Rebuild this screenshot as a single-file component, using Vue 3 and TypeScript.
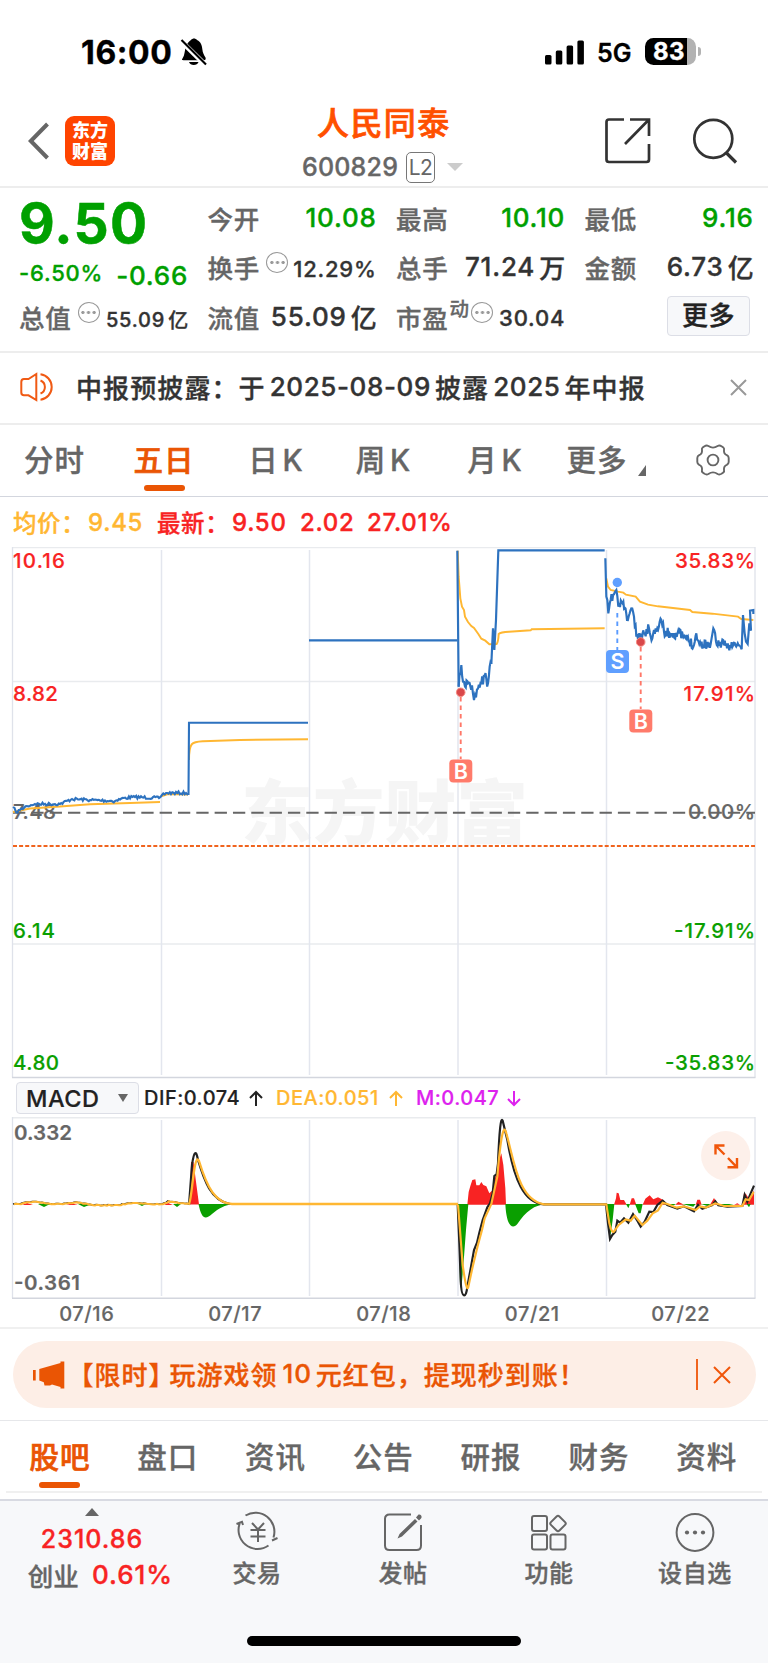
<script setup lang="ts">
type Pt = [number, number]

/** Deterministic intraday jitter laid over a coarse list of anchors. */
function wiggle(anchors: Pt[], step: number, amp: number, seed = 1): string {
  const out: string[] = []
  let s = seed
  const rnd = () => {
    s = (s * 16807) % 2147483647
    return s / 2147483647 - 0.5
  }
  anchors.forEach(([x, y], i) => {
    out.push(`${x.toFixed(1)},${y.toFixed(1)}`)
    const next = anchors[i + 1]
    if (!next) return
    const n = Math.floor((next[0] - x) / step)
    for (let k = 1; k < n; k++) {
      const t = k / n
      out.push(`${(x + (next[0] - x) * t).toFixed(1)},${(y + (next[1] - y) * t + rnd() * 2 * amp).toFixed(1)}`)
    }
  })
  return out.join(' ')
}

const day1 = wiggle([[13, 807], [16, 812], [20, 810], [27, 806], [35, 804], [60, 804], [72, 799], [90, 800], [115, 801], [124, 798], [135, 797], [159, 798], [162, 795], [166, 793], [186, 793], [188, 795]], 1.2, 1.5, 7)
const day4 = wiggle([[224, 800], [232, 735], [237, 785], [243, 800], [252, 790], [264, 796], [270, 840], [276, 832], [282, 806], [292, 790], [302, 768], [312, 790], [317, 740], [322, 732]], 2.2, 17, 5)
const day5 = wiggle([[664, 415], [667, 530], [673, 580], [680, 540], [697, 510], [703, 560], [718, 545], [729, 600], [742, 565], [750, 590], [757, 650], [768, 655], [780, 640], [795, 625], [805, 655], [815, 625], [832, 600], [840, 635], [862, 642], [885, 640], [905, 655], [930, 675], [937, 640], [946, 672], [980, 672], [988, 625], [996, 665], [1020, 676], [1068, 676]], 2.2, 15, 11)

const macdCalm = wiggle([[13, 1204], [20, 1204], [26, 1202], [38, 1202], [50, 1204], [62, 1204], [76, 1202], [92, 1205], [118, 1205], [128, 1203], [140, 1203], [150, 1204], [162, 1204], [168, 1201], [180, 1203], [189, 1204]], 2, 0.5, 3)

const tabs = ['分时', '五日', '日 K', '周 K', '月 K', '更多']
const sections = ['股吧', '盘口', '资讯', '公告', '研报', '财务', '资料']
const dates = ['07/16', '07/17', '07/18', '07/21', '07/22']
const gridX = [161.5, 309.5, 458, 606.5]

interface Label { t: string; x: number; y: number; w: number; c: string; end?: boolean }
const labels: Label[] = [
  { t: '10.16', x: 13, y: 568, w: 52, c: 'up' },
  { t: '8.82', x: 13, y: 700.5, w: 45, c: 'up' },
  { t: '7.48', x: 13, y: 819, w: 43, c: 'flat' },
  { t: '6.14', x: 13, y: 937.5, w: 42, c: 'down' },
  { t: '4.80', x: 13, y: 1070, w: 46, c: 'down' },
  { t: '35.83%', x: 755, y: 568, w: 80, c: 'up', end: true },
  { t: '17.91%', x: 755, y: 700.5, w: 71.5, c: 'up', end: true },
  { t: '0.00%', x: 755, y: 819, w: 67, c: 'flat', end: true },
  { t: '-17.91%', x: 755, y: 937.5, w: 81, c: 'down', end: true },
  { t: '-35.83%', x: 755, y: 1070, w: 90, c: 'down', end: true },
]
</script>

<template>
  <div class="screen">
    <header class="status">
      <span class="clock">16:00</span>
      <svg class="bell" width="27" height="30" viewBox="0 0 27 30">
        <path d="M2.500 21.500C5 18 4.500 13 6 9.500 7.500 5.500 10 3.500 11 3 12.500 1 15.500 1 17 3 21 5 22 8.500 22.300 12 22.700 16 24 18 25.500 20.500 26 22 25.500 23.200 24 23.200H3.500C1.800 23.200 1.500 22.500 2.500 21.500ZM9 25H18.500C17.500 29 10 29 9 25Z" />
        <path d="M0 3 25 27.500" stroke="#fff" stroke-width="5" />
        <path d="M1.500 3 26 27.500" stroke="#000" stroke-width="2.200" />
      </svg>
      <svg class="signal" width="40" height="26" viewBox="0 0 40 26">
        <rect x="0" y="15" width="6.500" height="9.500" rx="1.500" /><rect x="10.800" y="10.500" width="6.500" height="14" rx="1.500" />
        <rect x="21.600" y="5.500" width="6.500" height="19" rx="1.500" /><rect x="32.400" y="0.500" width="6.500" height="24" rx="1.500" />
      </svg>
      <span class="net">5G</span>
      <div class="battery"><span>83</span></div>
      <i class="nub"></i>
    </header>

    <nav class="titlebar">
      <svg class="back" width="22" height="38" viewBox="0 0 22 38"><path d="M19.500 2 2.800 19 19.500 36" fill="none" stroke="#666" stroke-width="4" /></svg>
      <div class="brand"><span>东方</span><span>财富</span></div>
      <div class="stock">
        <h1>人民同泰</h1>
        <div class="code"><span>600829</span><b>L2</b><i></i></div>
      </div>
      <svg class="share" width="46" height="46" viewBox="0 0 46 46" fill="none" stroke="#333" stroke-width="2.700">
        <path d="M19 1.500H4Q1.500 1.500 1.500 4V41.500Q1.500 44 4 44H41.500Q44 44 44 41.500V26M25 1.500H44V18M44 1.500 20 26" />
      </svg>
      <svg class="search" width="46" height="46" viewBox="0 0 46 46" fill="none" stroke="#333" stroke-width="2.700">
        <circle cx="21.300" cy="20.800" r="19" /><path d="M34 34.500 44 44.500" stroke-width="3.200" />
      </svg>
    </nav>

    <section class="quote">
      <div class="col">
        <div class="price">9.50</div>
        <div class="row chg"><span class="g s22">-6.50%</span><span class="g v">-0.66</span></div>
        <div class="row"><label>总值</label><i class="tip"></i><span class="v s20">55.09<em>亿</em></span></div>
      </div>
      <div class="col">
        <div class="row"><label>今开</label><span class="v g">10.08</span></div>
        <div class="row"><label>换手</label><i class="tip"></i><span class="v s22">12.29%</span></div>
        <div class="row"><label>流值</label><span class="v">55.09<em>亿</em></span></div>
      </div>
      <div class="col">
        <div class="row"><label>最高</label><span class="v g">10.10</span></div>
        <div class="row"><label>总手</label><span class="v">71.24<em>万</em></span></div>
        <div class="row"><label>市盈</label><sup>动</sup><i class="tip near"></i><span class="v s22">30.04</span></div>
      </div>
      <div class="col">
        <div class="row"><label>最低</label><span class="v g">9.16</span></div>
        <div class="row"><label>金额</label><span class="v">6.73<em>亿</em></span></div>
        <div class="row"><button class="more">更多</button></div>
      </div>
    </section>

    <section class="notice">
      <svg width="36" height="30" viewBox="0 0 36 30" fill="none" stroke="#f05a14" stroke-width="2">
        <path d="M16.300 2V28L8.500 23.300H4Q1.300 23.300 1.300 20.500V10Q1.300 7 4 7H8.500ZM20.500 2.300A12.800 12.800 0 0 1 20.500 27.700M20.500 8.500A7 7 0 0 1 20.500 21.500" />
      </svg>
      <p><span>中报预披露：于</span><span class="num">2025-08-09</span><span>披露</span><span class="num">2025</span><span>年中报</span></p>
      <svg class="x" width="17" height="17" viewBox="0 0 17 17" stroke="#999" stroke-width="2"><path d="M1 1 16 16M16 1 1 16" /></svg>
    </section>

    <nav class="periods">
      <span v-for="(t, i) in tabs" :key="t" :class="{ on: i === 1 }">{{ t }}</span>
      <i class="corner"></i>
      <svg width="34" height="34" viewBox="-17 -17 34 34" fill="none" stroke="#666" stroke-width="1.900">
        <circle r="5.400" />
        <path d="M-4.600 -14Q-6.500 -15 -8.500 -13.800L-10.300 -12.600Q-11.500 -11.500 -11 -9.800 -10.600 -6 -13.800 -4.800 -15.700 -3.800 -15.700 -2V2Q-15.700 3.800 -13.800 4.800 -10.600 6 -11 9.800 -11.500 11.500 -10.300 12.600L-8.500 13.800Q-6.500 15 -4.600 14 0 10.800 4.600 14 6.500 15 8.500 13.800L10.300 12.600Q11.500 11.500 11 9.800 10.600 6 13.800 4.800 15.700 3.800 15.700 2V-2Q15.700 -3.800 13.800 -4.800 10.600 -6 11 -9.800 11.500 -11.500 10.300 -12.600L8.500 -13.800Q6.500 -15 4.600 -14 0 -10.800 -4.600 -14Z" />
      </svg>
    </nav>

    <div class="legend">
      <span class="y">均价：</span><span class="y n">9.45</span><span>最新：</span><span class="n">9.50</span><span class="n">2.02</span><span class="n">27.01%</span>
    </div>

    <svg class="kline" width="768" height="532" viewBox="0 547 768 532" fill="none">
      <text class="mark" x="241" y="839" textLength="287" lengthAdjust="spacingAndGlyphs">东方财富</text>
      <path d="M12.500 547.500H755M12.500 681.500H755M12.500 944H755" stroke="#e9ebee" stroke-width="1.500" />
      <path d="M12.500 547V1077.500M755 547V1077.500" stroke="#dfe2ea" stroke-width="1.300" />
      <path d="M12 1077.500H755.500" stroke="#d3d6de" stroke-width="1.500" />
      <path v-for="x in gridX" :key="x" :d="`M${x} 550V1075`" stroke="#e3e6ee" stroke-width="1.500" />
      <text v-for="l in labels" :key="l.t" :x="l.end ? l.x - l.w : l.x" :y="l.y" :textLength="l.w" class="lab" :class="l.c">{{ l.t }}</text>
      <path d="M13 812.700H755" stroke="#666" stroke-width="2" stroke-dasharray="12.300 6.030" />
      <path d="M13 846H755" stroke="#f0641e" stroke-width="2" stroke-dasharray="4 2.100" />
      <g stroke="#ffb732" stroke-width="2">
        <path d="M13 812 30 808.500 60 806.500 90 804.300 130 803 160 802M162 796 168 794 188 794.500M189 760C189 742 192 742 203 741.300L240 740 308 739.200" />
        <g transform="translate(384 420) scale(.33333)" stroke-width="5.800">
          <path d="M221 392 224 470 229 535 234 560 240 570 243 590 252 606 262 618 270 624 283 642 292 656 304 662 316 673 338 672Q343 665 344 642 350 636 375 635L440 631 443 628 662 625" />
          <path d="M667 475 672 500 680 510 702 515 718 518 726 524 755 530 768 545 792 554 822 559 918 570 925 576 985 581 1062 590 1072 597 1108 600" />
        </g>
      </g>
      <g stroke="#2d72bf" stroke-width="2.100">
        <polyline :points="day1" />
        <path d="M188.500 795 189 722.700H308M309 640.400H457.500" />
        <g transform="translate(384 420) scale(.33333)" stroke-width="6.500">
          <path d="M220 392 224 800M322 732 327 625 331 690 336 600 343 391H662" />
          <polyline :points="day4" />
          <polyline :points="day5" />
          <path d="M1068 676 1073 688 1077 585 1082 640 1086 665 1091 672 1096 610 1101 632 1098 572 1108 570V582" />
        </g>
      </g>
      <g stroke-width="1.900" stroke-dasharray="4.500 4">
        <path d="M460.700 697V759M640.700 647V709" stroke="#ff7768" />
        <path d="M617.300 613V650" stroke="#5a9bff" />
      </g>
      <g stroke="#f78a80" stroke-width="1" fill="#d9484a"><circle cx="460.700" cy="692.300" r="4.300" /><circle cx="640.700" cy="642" r="4.300" /></g>
      <circle cx="617.300" cy="582.500" r="4.700" fill="#5f9fff" />
      <rect x="449.300" y="759.500" width="23" height="23" rx="4" fill="#ff7b6b" />
      <rect x="629.300" y="709.500" width="23" height="23" rx="4" fill="#ff7b6b" />
      <rect x="606" y="650" width="23" height="23" rx="4" fill="#5f9fff" />
      <text class="badge" x="460.800" y="778.500">B</text><text class="badge" x="640.800" y="728.500">B</text><text class="badge" x="617.500" y="669.200">S</text>
    </svg>

    <div class="indicator">
      <div class="pick">MACD<i></i></div>
      <span class="dif">DIF:0.074</span>
      <svg width="14" height="17" viewBox="0 0 14 17"><path d="M7 16V2M1 8 7 2 13 8" stroke="#222" /></svg>
      <span class="dea">DEA:0.051</span>
      <svg width="14" height="17" viewBox="0 0 14 17"><path d="M7 16V2M1 8 7 2 13 8" stroke="#ffb732" /></svg>
      <span class="mac">M:0.047</span>
      <svg width="14" height="17" viewBox="0 0 14 17"><path d="M7 1V15M1 9 7 15 13 9" stroke="#dd22ee" /></svg>
    </div>

    <svg class="macd" width="768" height="183" viewBox="0 1117 768 183" fill="none">
      <path d="M12.500 1117.700H755" stroke="#e9ebee" stroke-width="1.500" />
      <path d="M12.500 1117V1298M755 1117V1298" stroke="#dfe2ea" stroke-width="1.300" />
      <path d="M12 1298.300H755.500" stroke="#d3d6de" stroke-width="1.500" />
      <path v-for="x in gridX" :key="x" :d="`M${x} 1120V1296`" stroke="#e3e6ee" stroke-width="1.500" />
      <text class="lab flat b" x="14" y="1140" textLength="58">0.332</text>
      <text class="lab flat b" x="14" y="1290" textLength="66">-0.361</text>
      <g fill="#f82323">
        <path d="M22 1205 27 1203 33 1205ZM66 1205 72 1203.500 78 1205ZM164 1205 168 1203 173 1205ZM190 1204.500 191 1162H193.500L195.500 1178 199 1204.500Z" />
        <path transform="translate(384 1070) scale(.33333)" d="M250 404 254 366 259 348 265 330 274 328 277 346 286 346 292 336 298 345 307 349 316 370 326 360 334 320 345 270 352 250 358 285 364 355 366 404ZM690 404 696 385 698 368 704 370 709 390 720 390 728 404ZM737 404 743 385 750 385 757 404ZM776 404 784 386 797 376 808 388 822 382 838 390 850 404ZM874 404 883 395 900 404ZM935 404 940 389 948 389 953 404ZM978 404 990 384 1002 404ZM1050 404 1060 400 1068 404ZM1076 404 1080 368 1086 372 1094 385 1105 375 1110 360V404Z" />
      </g>
      <g fill="#0a9f00">
        <path d="M38 1204H50L44 1207ZM78 1204H92L84 1207ZM138 1204H146L142 1206ZM173 1204H181L177 1207ZM198.500 1204H233C225 1205 219 1208 212 1214 206 1219 202 1221 198.500 1204Z" />
        <path transform="translate(384 1070) scale(.33333)" d="M222 402H253L246 480 240 560 232 660 228 640ZM364 402H490C450 404 425 425 400 462 390 475 368 480 364 402ZM669 402H691L686 450 679 500ZM726 402H738L733 415ZM753 402H776L770 430H764ZM838 402H876L865 408ZM895 402H935L928 410ZM951 402H980L970 408ZM1000 402H1050L1020 408ZM1088 402H1100L1095 412Z" />
      </g>
      <g stroke="#222" stroke-width="2.200">
        <polyline :points="macdCalm" stroke-width="1.600" />
        <path d="M189 1205 192 1165Q195 1144 198 1160C204 1180 211 1201 230 1204H458" />
        <path transform="translate(384 1070) scale(.33333)" stroke-width="6.500" d="M221 404 226 520 230 630Q232 676 240 676 247 677 250 650L261 590 270 540 279 518 286 488 296 450 310 412 318 400 326 370 331 318 338 312 342 280Q348 130 356 152L370 210C390 330 420 400 480 403H666L672 460 678 507 685 495 694 485 700 452 708 458 720 445 733 458 747 432 760 452 770 470 782 455 796 425 808 426 820 405 836 392 850 405 880 416 900 409 930 424 942 405 955 416 985 405 994 394 1003 406 1030 410 1075 408 1082 375 1090 395 1100 370 1110 347" />
      </g>
      <g stroke="#ffb732" stroke-width="2.300">
        <polyline :points="macdCalm" stroke-width="2" transform="translate(1 .2)" />
        <path d="M189 1204C192 1200 194 1150 199 1161 207 1187 215 1203 232 1204H458" />
        <path transform="translate(384 1070) scale(.33333)" stroke-width="6.500" d="M222 404 228 480 236 585Q248 672 253 650L266 590 281 528 294 480 302 445 322 402 340 320Q355 140 367 190C390 270 402 390 480 403H667L676 460Q684 495 692 482L704 465 725 448 740 452 752 437 775 465 790 452 806 430 822 421 836 398 850 402 878 413 900 409 935 420 948 409 965 413 994 400 1020 408 1075 408 1085 388 1095 390 1109 366" />
      </g>
      <circle cx="725.700" cy="1155.700" r="24.600" fill="#fdf0ea" />
      <path d="M724.500 1145.500H715.500V1154.500M715.500 1145.500 724.500 1154.500M727.500 1167.300H737V1158M737 1167.300 728 1158" stroke="#f0560a" stroke-width="2.400" />
    </svg>

    <div class="dates"><span v-for="d in dates" :key="d">{{ d }}</span></div>

    <div class="promo-wrap">
      <div class="promo">
        <svg width="32" height="28" viewBox="0 0 32 28" fill="#ea5504"><path d="M0 9H2.700V19.500H0ZM6.300 8 27.500 2V.500H31.300V27.500H27.500V26L19 23.500 17 24.500H11.500L10.800 21.300 6.300 19.500Z" /></svg>
        <p><span class="open">【</span><span>限时</span><span class="close">】</span><span>玩游戏领</span><span class="ten">10</span><span>元红包，提现秒到账！</span></p>
        <i></i>
        <svg width="18" height="18" viewBox="0 0 18 18" stroke="#f0560a" stroke-width="2"><path d="M1 1 17 17M17 1 1 17" /></svg>
      </div>
    </div>

    <nav class="sections"><span v-for="(s, i) in sections" :key="s" :class="{ on: i === 0 }">{{ s }}</span></nav>
    <div class="rule"></div>

    <footer class="dock">
      <div class="index">
        <i></i>
        <span class="pts">2310.86</span>
        <div><span class="nm">创业</span><span class="pc">0.61%</span></div>
      </div>
      <div class="item">
        <svg width="46" height="42" viewBox="-1.500 0 46 42"><path d="M10 4.500A19 19 0 0 1 38 26.500M33 34.500A19 19 0 0 1 4.800 11M1 13 6.500 10.800 7.500 14M36.500 29.500 42 27M16.500 12 22.500 18.500 28.500 12M15 19H30M15 25.500H30M22.500 18.500V31" /></svg>
        <span>交易</span>
      </div>
      <div class="item">
        <svg width="46" height="42" viewBox="-.500 0 46 42"><path d="M30.500 3.500H9Q4.500 3.500 4.500 8V34.500Q4.500 39 9 39H36Q40.500 39 40.500 34.500V14" /><path d="M38 3.500A2.500 2.500 0 0 1 40.500 7.500L38.500 9.500 35.500 6.500ZM34.500 8 37 10.500 21.500 25.500 17 27.500 19 23Z" fill="#666" stroke="none" /></svg>
        <span>发帖</span>
      </div>
      <div class="item">
        <svg width="46" height="42" viewBox="-.500 0 46 42"><rect x="5.500" y="5" width="15" height="15" rx="2" /><rect x="5.500" y="23.500" width="15" height="15" rx="2" /><rect x="24" y="23.500" width="15" height="15" rx="2" /><rect x="-6" y="-6" width="12" height="12" rx="2" transform="translate(31.500 12.500) rotate(45)" /></svg>
        <span>功能</span>
      </div>
      <div class="item">
        <svg width="46" height="42" viewBox="-.500 0 46 42"><circle cx="22.500" cy="21.500" r="18.400" /><g fill="#666" stroke="none"><circle cx="14.500" cy="21.500" r="2.100" /><circle cx="22.500" cy="21.500" r="2.100" /><circle cx="30.500" cy="21.500" r="2.100" /></g></svg>
        <span>设自选</span>
      </div>
    </footer>
    <div class="home"><i></i></div>
  </div>
</template>

<style>
body { background: #fff; }
</style>

<style scoped>
.screen { width: 768px; height: 1663px; overflow: hidden; box-sizing: border-box; background: #fff; font-family: Inter, "Noto Sans CJK SC", sans-serif; font-weight: 500; -webkit-text-stroke: 0.35px; color: #333; display: flex; flex-direction: column; white-space: nowrap; }
.screen > * { flex: none; box-sizing: border-box; }
i, em { font-style: normal; }
p, h1 { margin: 0; }

.status { height: 90px; padding: 36px 0 0 81px; display: flex; align-items: flex-start; }
.clock { width: 99px; font-size: 32px; line-height: 34px; font-weight: 700; color: #000; letter-spacing: 0.600px; }
.bell { margin-top: 1px; }
.signal { margin: 4px 0 0 338px; }
.net { width: 48px; margin-left: 12px; font-size: 25px; line-height: 35px; font-weight: 600; color: #000; }
.battery { width: 51px; height: 27px; margin-top: 2px; border-radius: 8.500px; background: linear-gradient(90deg, #000 42px, #b2b2b2 42px); color: #fff; font-size: 24px; line-height: 27px; font-weight: 700; text-indent: 8px; letter-spacing: 0.500px; }
.nub { width: 3px; height: 9px; margin: 11px 0 0 2px; border-radius: 0 4px 4px 0; background: #b2b2b2; }

.titlebar { height: 98px; border-bottom: 2px solid #ededed; display: flex; align-items: flex-start; }
.back { margin: 32px 0 0 28px; }
.brand { width: 50px; height: 50px; margin: 25.500px 0 0 15px; border-radius: 9px; background: #ff4400; color: #fff; display: flex; flex-direction: column; align-items: center; padding-top: 4px; box-sizing: border-box; -webkit-text-stroke: 0; }
.brand span { font-size: 18px; line-height: 21px; font-weight: 900; }
.stock { width: 490px; padding-top: 15px; box-sizing: border-box; padding-left: 47px; }
.stock h1 { width: 444px; font-size: 32px; line-height: 38px; font-weight: 500; letter-spacing: 1.400px; color: #ff5000; padding-left: 155px; box-sizing: border-box; -webkit-text-stroke: 0.700px; }
.code { display: flex; align-items: center; height: 32px; margin: 8px 0 0 140px; color: #666; font-size: 25px; letter-spacing: 0.200px; }
.code span { width: 104px; }
.code b { width: 27px; height: 29px; border: 1px solid #777; border-radius: 5px; font-size: 21px; font-weight: 400; line-height: 29px; text-align: center; letter-spacing: -0.500px; -webkit-text-stroke: 0; }
.code i { margin-left: 12px; border: 8px solid transparent; border-top-color: #ccc; border-bottom: 0; }
.share { margin: 27.500px 0 0 0; }
.search { margin: 27.500px 0 0 41px; }

.quote { height: 165px; border-bottom: 2px solid #ededed; padding: 5px 0 0 19px; display: grid; grid-template-columns: repeat(4, 168.500px); column-gap: 20px; }
.row { height: 49.300px; display: flex; align-items: center; }
.price { height: 57px; font-size: 55px; line-height: 61px; font-weight: 700; color: #00a000; letter-spacing: 1.200px; -webkit-text-stroke: 0.500px; }
.chg { height: 41.600px; padding-top: 6px; box-sizing: border-box; }
label { font-size: 25.500px; color: #666; letter-spacing: 0.800px; }
.v { margin: 0 -0.700px 0 auto; font-size: 26px; color: #333; display: flex; align-items: center; letter-spacing: 0.800px; }
.v em { margin-left: 4px; letter-spacing: 0; }
.s22 { font-size: 22px; letter-spacing: 0.800px; margin-top: 4px; }
.chg .s22 { margin-top: -2px; }
.chg .v { margin-top: 3px; }
.s20 { font-size: 20px; letter-spacing: 0.800px; margin-top: 7px; }
.s20 em { margin-left: 3px; }
.row .g { color: #00a000; }
.tip { flex: none; width: 17px; height: 19px; padding: 0 1.500px; border: 1.500px solid #999; border-radius: 50%; margin: -8px 0 0 6px; background: radial-gradient(circle, #999 1.300px, transparent 1.900px) center / 5.660px 19px repeat-x content-box; }
.near { margin-left: 2px; }
sup { font-size: 19.500px; line-height: 20px; color: #666; margin: -15px 0 0 1px; -webkit-text-stroke: 0.300px; }
.more { margin: -1px 3px 0 auto; width: 83px; height: 40px; border: 1.500px solid #dcdee6; border-radius: 4px; background: #f7f8fa; font: inherit; font-size: 26px; font-weight: 500; color: #222; padding: 0; letter-spacing: 0.500px; line-height: 36px; }

.notice { height: 72px; border-bottom: 2px solid #ededed; display: flex; align-items: center; padding: 0 0 2px 20px; }
.notice p { width: 654px; margin: -1px 0 0 20px; display: flex; align-items: center; font-size: 26px; letter-spacing: 1.100px; color: #333; }
.notice .num { margin: 0 4px 0 4px; letter-spacing: 0.600px; }

.periods { height: 72px; border-bottom: 1.500px solid #d3d6de; display: flex; align-items: center; color: #666; font-size: 29.500px; letter-spacing: 1px; word-spacing: -5px; }
.periods span { height: 100%; text-align: center; line-height: 71px; display: flex; flex-direction: column; align-items: center; }
.periods span:nth-child(1) { width: 109px; }
.periods span:nth-child(2) { width: 110px; }
.periods span:nth-child(3) { width: 114px; }
.periods span:nth-child(4) { width: 101px; }
.periods span:nth-child(5) { width: 122px; }
.periods span:nth-child(6) { width: 82px; }
.periods .on, .sections .on { color: #ea5504; -webkit-text-stroke: 0.700px; }
.on::after { content: ""; width: 41px; height: 6px; border-radius: 3px; background: #ea5504; margin-top: -11px; }
.corner { width: 8px; height: 11px; background: #666; clip-path: polygon(100% 0, 100% 100%, 0 100%); margin: 20px 50px 0 0; }
.periods svg { margin-top: -1px; }

.legend { height: 50px; padding-left: 13px; display: grid; grid-template-columns: 75px 69px 75px 68px 67px auto; align-items: center; color: #f82323; font-size: 23.500px; letter-spacing: 0.600px; }
.legend .n { font-size: 24px; letter-spacing: 0.700px; }
.legend .y { color: #ffb732; }
.kline, .macd { display: block; }
.mark { font-size: 70px; font-weight: 900; fill: #f5f5f5; -webkit-text-stroke: 0; }
.lab { font-size: 20.500px; font-weight: 500; stroke-width: 0.200px; -webkit-text-stroke: 0; }
.up { fill: #f82323; stroke: #f82323; }
.down { fill: #0a9f00; stroke: #0a9f00; }
.flat { fill: #666; stroke: #666; }
.b { font-weight: 600; }
.badge { fill: #fff; font-size: 21.500px; font-weight: 600; text-anchor: middle; -webkit-text-stroke: 0; }

.indicator { height: 38px; padding-left: 16px; display: flex; align-items: center; font-size: 20px; letter-spacing: 0.500px; -webkit-text-stroke: 0.200px; }
.indicator svg { fill: none; stroke-width: 2; margin-right: 13px; }
.pick { width: 123px; height: 32px; box-sizing: border-box; border: 1.500px solid #dcdee6; border-radius: 4px; background: #f7f8fa; display: flex; align-items: center; justify-content: space-between; padding: 0 10px 0 9px; font-size: 23.500px; color: #222; margin-right: 5px; }
.pick i { border: 5px solid transparent; border-top: 8px solid #666; border-bottom: 0; }
.dif { width: 105px; color: #222; }
.dea { width: 113px; color: #ffb732; }
.mac { width: 91px; color: #dd22ee; }

.dates { height: 29px; padding-left: 12.500px; border-bottom: 2px solid #f0f0f0; display: flex; line-height: 29px; font-size: 20px; color: #666; letter-spacing: 0.600px; -webkit-text-stroke: 0.200px; }
.dates span { width: 148.500px; text-align: center; }

.promo-wrap { height: 92px; padding: 12px 12.500px; border-bottom: 1.500px solid #e6e7ea; }
.promo { height: 67px; border-radius: 34px; background: #fdeee6; display: flex; align-items: center; padding-left: 20px; color: #ea5504; }
.promo p { width: 617px; margin: -2px 0 0 3px; display: flex; align-items: center; font-size: 26px; letter-spacing: 1px; }
.promo .open { margin-left: 13px; font-feature-settings: "halt"; }
.promo .close { margin-right: 7px; font-feature-settings: "halt"; }
.ten { margin: 0 4px 0 5px; letter-spacing: 0.800px; }
.promo i { width: 2px; height: 31px; background: #f0641e; margin: 0 15px 0 11px; }

.sections { height: 72px; display: flex; margin: 0 6px; font-size: 29.500px; letter-spacing: 1px; color: #666; border-bottom: 2px solid #f0f0f0; }
.sections span { width: 107.800px; display: flex; flex-direction: column; align-items: center; line-height: 72px; }
.sections .on::after { margin-top: -11px; }
.rule { height: 6px; }

.dock { height: 122px; border-top: 2px solid #d8dae2; background: #f7f8fa; display: flex; color: #666; }
.index { width: 184px; display: flex; flex-direction: column; align-items: center; }
.index > i { margin: 7px 0 0; border: 7.500px solid transparent; border-bottom: 8px solid #666; border-top: 0; }
.pts { font-size: 25px; line-height: 30px; color: #f82323; margin-top: 8px; letter-spacing: 1px; }
.index div { display: flex; align-items: center; height: 40px; padding-left: 17px; font-size: 25.500px; gap: 13px; }
.pc { color: #f82323; font-size: 26px; letter-spacing: 1px; }
.item { width: 146px; display: flex; flex-direction: column; align-items: center; padding-top: 10px; }
.item svg { fill: none; stroke: #666; stroke-width: 2; }
.item span { font-size: 24px; line-height: 38px; letter-spacing: 0.600px; margin-top: 2px; }
.home { height: 44px; background: #f7f8fa; display: flex; justify-content: center; padding-top: 15px; }
.home i { width: 274px; height: 10px; border-radius: 5px; background: #000; }
</style>
